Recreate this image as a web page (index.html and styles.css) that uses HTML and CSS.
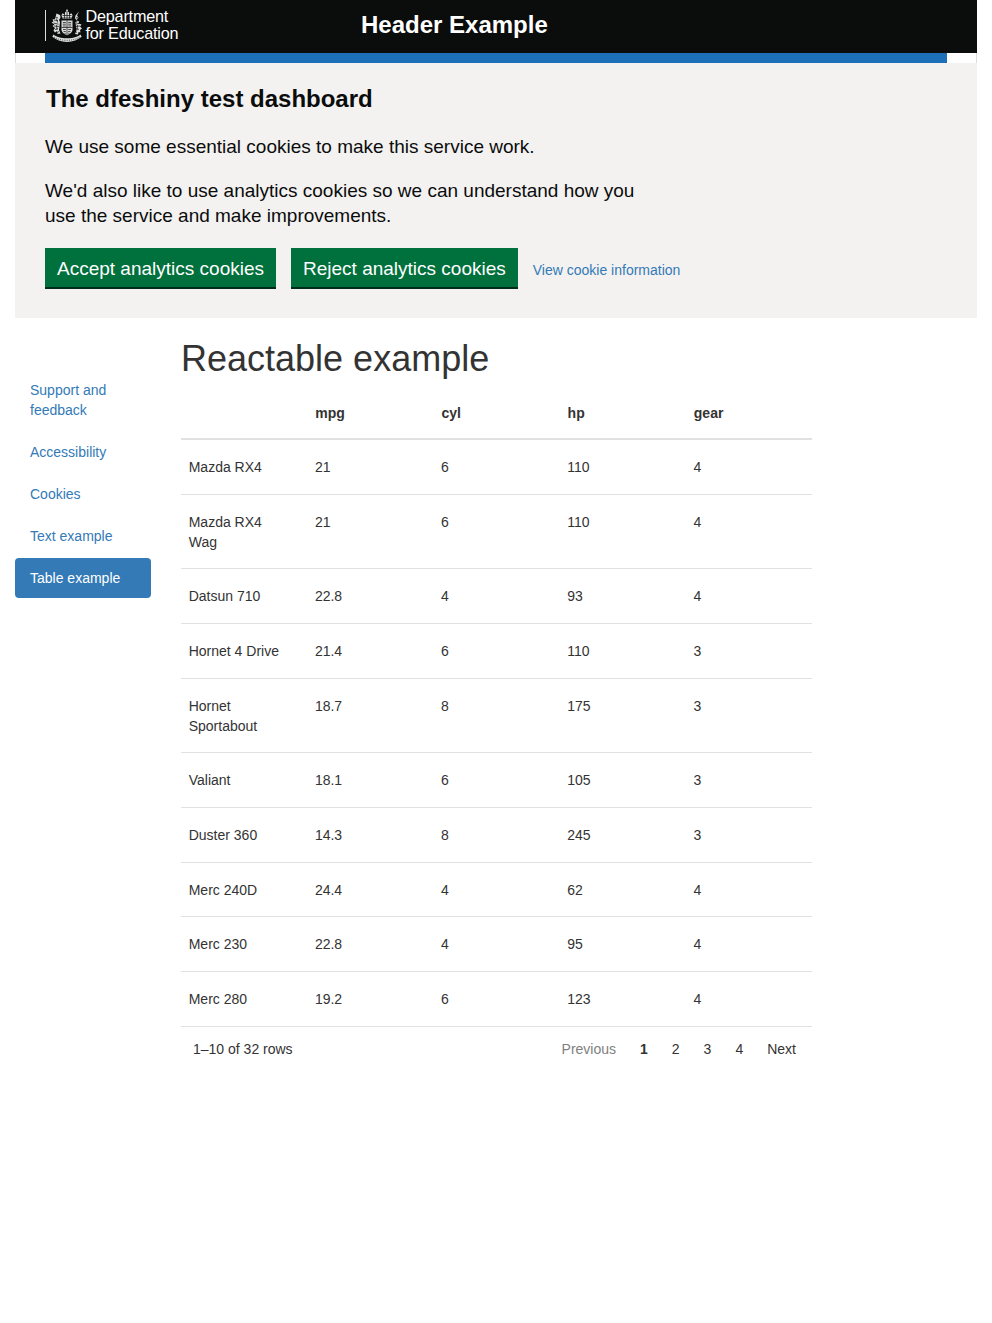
FILE: index.html
```html
<!DOCTYPE html>
<html lang="en">
<head>
<meta charset="UTF-8">
<meta name="viewport" content="width=device-width, initial-scale=1.0">
<title>The dfeshiny test dashboard</title>
<link rel="stylesheet" href="styles.css">
</head>
<body>
<div class="page">
<header class="dfe-header">
  <div class="logo">
    <span class="logo-rule"></span>
    <svg class="crest" viewBox="0 0 32 33" width="32" height="33" aria-hidden="true">
      <g fill="#dcdcdc">
        <!-- crown -->
        <path d="M16 0l1 1.600-.6 1 1.400.4.600 2.500 2-1.200 1.100 2-1 3.500h-9l-1-3.500 1.100-2 2 1.200.6-2.500 1.400-.4-.6-1z"/>
        <!-- shield -->
        <path d="M10.500 11.500h11v9c0 3-2.800 4.700-5.500 5.700-2.700-1-5.500-2.700-5.500-5.700z"/>
        <!-- lion -->
        <path d="M5.500 4.500l3.500 1.500.5 2.500-1.500 2.500 1 2-1 8 1.500 3.500-3 .5-.5-3-2 1.500-1.500-2 1.500-2.500-2.500-2 2-1.500-3-2 2-1-1-2 2.500-.5z"/>
        <!-- unicorn -->
        <path d="M28 2.500l-2 4 1.500 2-1.500 2.500 2 1.500-.5 2 3 1-1.500 2 2 2-2 1.500.5 2.500-2-.5-.5 2.500-3-.5 1.500-3.500-1-8 1-2-1.500-2.500.5-2.500z"/>
        <!-- motto -->
        <path d="M2.500 25.500c3.500 2.500 7 3.700 13.500 3.700s10-1.200 13.500-3.700l1.200 2.300c-3.700 3-8.700 5.200-14.700 5.200s-11-2.200-14.700-5.200z"/>
      </g>
      <g fill="none" stroke="#0b0c0c" stroke-width=".7">
        <path d="M16 11.500v14.500M10.500 18.500h11M11.800 13.500h3M17.200 13.500h3M11.800 15.200h3M17.200 15.200h3M11.800 17h3M17.200 17h3M12 20.500h2.800M17.200 20.500h2.800M12.500 22.500h2.300M17.200 22.500h2.300M13.500 24.300h1.300M17.200 24.300h1.300"/>
        <path d="M11.500 6.500h9M13.500 3.500v6M16 2.500v7M18.500 3.500v6M11 9h10"/>
        <path d="M4.500 8l2.500 1M3 11l4 .8M2.500 14l5 1.200M3 17l5 .5M4 20.500l3-1M6.500 24l1-2M5.500 9.500l1 4M5.500 16l.5 5"/>
        <path d="M27.500 8l-2.500 1M29 11l-4 .8M29.500 14l-5 1.200M29 17l-5 .5M28 20.500l-3-1M25.500 24l-1-2M26.500 9.500l-1 4M26.500 16l-.5 5"/>
        <path d="M3 28c3.500 2.300 8 3.300 13 3.300s9.500-1 13-3.300" stroke-dasharray="1 1.200"/>
      </g>
    </svg>
    <span class="logo-text">Department<br>for Education</span>
  </div>
  <div class="header-title">Header Example</div>
</header>
<div class="header-strip"><div class="blue-bar"></div></div>

<section class="cookie-banner">
  <h2 class="cookie-title">The dfeshiny test dashboard</h2>
  <p class="cookie-text">We use some essential cookies to make this service work.</p>
  <p class="cookie-text">We'd also like to use analytics cookies so we can understand how you use the service and make improvements.</p>
  <div class="cookie-actions">
    <button class="cookie-btn">Accept analytics cookies</button>
    <button class="cookie-btn">Reject analytics cookies</button>
    <a class="cookie-link" href="#">View cookie information</a>
  </div>
</section>

<div class="content">
  <ul class="side-nav">
    <li><a href="#">Support and feedback</a></li>
    <li><a href="#">Accessibility</a></li>
    <li><a href="#">Cookies</a></li>
    <li><a href="#">Text example</a></li>
    <li class="active"><a href="#">Table example</a></li>
  </ul>
  <main class="main">
    <h1>Reactable example</h1>
    <div class="rt-table">
      <div class="rt-row rt-head"><div></div><div>mpg</div><div>cyl</div><div>hp</div><div>gear</div></div>
      <div class="rt-row"><div>Mazda RX4</div><div>21</div><div>6</div><div>110</div><div>4</div></div>
      <div class="rt-row"><div>Mazda RX4 Wag</div><div>21</div><div>6</div><div>110</div><div>4</div></div>
      <div class="rt-row"><div>Datsun 710</div><div>22.8</div><div>4</div><div>93</div><div>4</div></div>
      <div class="rt-row"><div>Hornet 4 Drive</div><div>21.4</div><div>6</div><div>110</div><div>3</div></div>
      <div class="rt-row"><div>Hornet Sportabout</div><div>18.7</div><div>8</div><div>175</div><div>3</div></div>
      <div class="rt-row"><div>Valiant</div><div>18.1</div><div>6</div><div>105</div><div>3</div></div>
      <div class="rt-row"><div>Duster 360</div><div>14.3</div><div>8</div><div>245</div><div>3</div></div>
      <div class="rt-row"><div>Merc 240D</div><div>24.4</div><div>4</div><div>62</div><div>4</div></div>
      <div class="rt-row"><div>Merc 230</div><div>22.8</div><div>4</div><div>95</div><div>4</div></div>
      <div class="rt-row"><div>Merc 280</div><div>19.2</div><div>6</div><div>123</div><div>4</div></div>
    </div>
    <div class="pagination">
      <div class="page-info">1–10 of 32 rows</div>
      <div class="page-btns">
        <span class="page-btn disabled">Previous</span>
        <span class="page-btn current">1</span>
        <span class="page-btn">2</span>
        <span class="page-btn">3</span>
        <span class="page-btn">4</span>
        <span class="page-btn">Next</span>
      </div>
    </div>
  </main>
</div>
</div>
</body>
</html>
```

FILE: styles.css
```css
* { box-sizing: border-box; }
body { margin: 0; font-family: "Liberation Sans", Arial, sans-serif; font-size: 14px; line-height: 20px; color: #333; background-color: #fff; }
.page { padding: 0 15px; }

.dfe-header { display: flex; align-items: center; height: 53px; background-color: #0b0c0c; color: #fff; padding-left: 30px; }
.logo { display: flex; align-items: center; width: 316px; }
.logo-rule { width: 1px; height: 31px; margin: 0 5px 3px 0; background-color: #ddd; }
.crest { margin: 0 3px 3px 0; flex-shrink: 0; }
.logo-text { font-size: 16.200px; line-height: 17px; letter-spacing: -0.2px; margin: 0 0 4px -0.5px; }
.header-title { font-size: 24px; font-weight: bold; line-height: 30px; margin-top: -3px; }

.header-strip { height: 11px; padding: 0 29px; border: 1px solid #ddd; border-top: 0; border-bottom: 0; }
.blue-bar { height: 10px; background-color: #1d70b8; }

.cookie-banner { height: 255px; margin-top: -1px; padding: 21px 30px 0; background-color: #f3f2f1; color: #0b0c0c; }
.cookie-title { margin: 0 0 0 1px; font-size: 24px; line-height: 30px; font-weight: bold; }
.cookie-text { width: 610px; margin: 20px 0 0; font-size: 19px; line-height: 25px; }
.cookie-text + .cookie-text { margin-top: 19px; }
.cookie-actions { display: flex; align-items: center; margin-top: 20.300px; }
.cookie-btn { height: 41px; padding: 0 12px; margin-right: 15px; border: 0; border-radius: 0; box-shadow: inset 0 -2px 0 #002d18; background-color: #00703c; color: #fff; font-family: inherit; font-size: 19px; cursor: pointer; }
.cookie-link { margin-top: 3px; color: #337ab7; text-decoration: none; }

.content { display: flex; }
.side-nav { width: 136px; margin: 52px 30px 0 0; padding: 0; list-style: none; flex-shrink: 0; }
.side-nav li { margin-bottom: 2px; }
.side-nav a { display: block; padding: 10px 15px; color: #337ab7; text-decoration: none; border-radius: 4px; }
.side-nav .active a { background-color: #337ab7; color: #fff; }

.main { width: 631px; }
h1 { margin: 21px 0 10px; font-size: 36px; line-height: 40px; font-weight: 500; }

.rt-row { display: grid; grid-template-columns: repeat(5, 1fr); border-bottom: 1px solid #e1e1e1; padding: 16.835px 0; }
.rt-row > div { padding: 0 8px 0 7.700px; }
.rt-row > div:first-child { padding-right: 15px; }
.rt-head { padding: 14px 0 15.100px; border-bottom-width: 2px; font-weight: bold; }
.rt-head > div { padding-left: 8px; }

.pagination { display: flex; justify-content: space-between; align-items: center; padding: 12px 4px 0 12px; }
.page-btn { display: inline-block; padding: 0 12px; }
.page-btns { display: flex; }
.disabled { color: #808080; }
.current { font-weight: bold; }
```
